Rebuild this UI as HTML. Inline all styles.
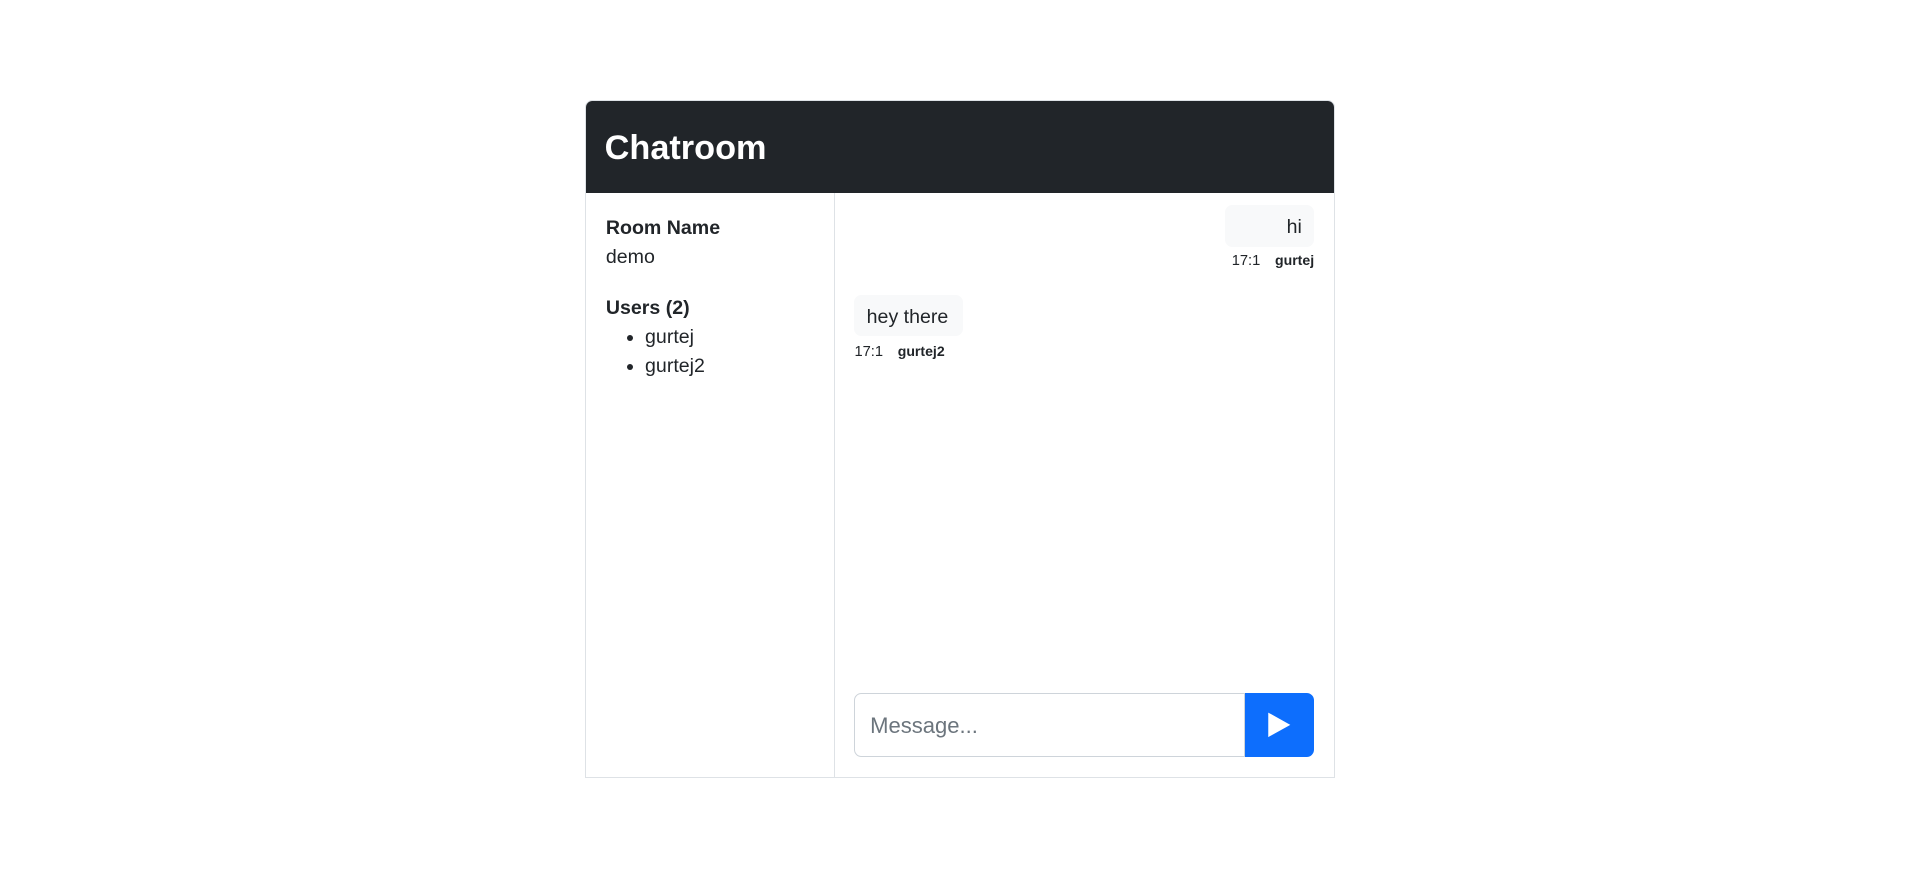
<!DOCTYPE html>
<html><head><meta charset="utf-8"><style>
html,body{margin:0;padding:0;background:#fff;overflow:hidden}
body{zoom:1.2245;width:1568px;height:717px;font-family:"Liberation Sans",Arial,sans-serif;color:#212529;position:relative}
.card{position:absolute;left:478px;top:82px;width:612px;height:553px;border:1px solid #dee2e6;box-sizing:border-box;border-radius:6px 6px 0 0;overflow:hidden}
.hdr{position:absolute;left:-1px;top:-1px;right:-1px;height:76px;background:#212529;color:#fff;font-weight:bold;font-size:28px;line-height:80px;padding-left:16px;box-sizing:border-box}
.side{position:absolute;left:0;top:75px;width:203px;bottom:0;border-right:1px solid #dee2e6;padding:17px 16px;box-sizing:border-box;font-size:16px;line-height:24px}
.side b{display:block}
.side ul{margin:0;padding-left:32px}
.chat{position:absolute;left:203px;top:75px;right:0;bottom:0}
.bub{position:absolute;background:#f8f9fa;border-radius:6px;font-size:16px;line-height:36px;height:34px;box-sizing:border-box}
.meta{position:absolute;font-size:12px;line-height:14px;white-space:nowrap}
.meta b{margin-left:12px;font-size:11.5px}
.inp{position:absolute;left:16px;top:408px;width:319px;height:52px;border:1px solid #ced4da;border-radius:6px 0 0 6px;box-sizing:border-box;font-size:18px;line-height:52px;padding-left:12px;color:#6c757d}
.btn{position:absolute;left:335px;top:408px;width:56px;height:52px;background:#0d6efd;border-radius:0 6px 6px 0}
</style></head><body>
<div class="card">
<div class="hdr">Chatroom</div>
<div class="side">
<b>Room Name</b><div>demo</div>
<b style="margin-top:17px">Users (2)</b>
<ul><li>gurtej</li><li>gurtej2</li></ul>
</div>
<div class="chat">
<div class="bub" style="right:16px;top:10px;width:73px;text-align:right;padding-right:10px">hi</div>
<div class="meta" style="right:16px;top:48px">17:1<b>gurtej</b></div>
<div class="bub" style="left:16px;top:83px;width:89px;padding-left:10px">hey there</div>
<div class="meta" style="left:16px;top:122px">17:1<b>gurtej2</b></div>
<div class="inp">Message...</div>
<div class="btn"><svg width="56" height="52" viewBox="0 0 56 52"><path d="M19 16 L37 26 L19 36 Z" fill="#fff"/></svg></div>
</div>
</div>
</body></html>
